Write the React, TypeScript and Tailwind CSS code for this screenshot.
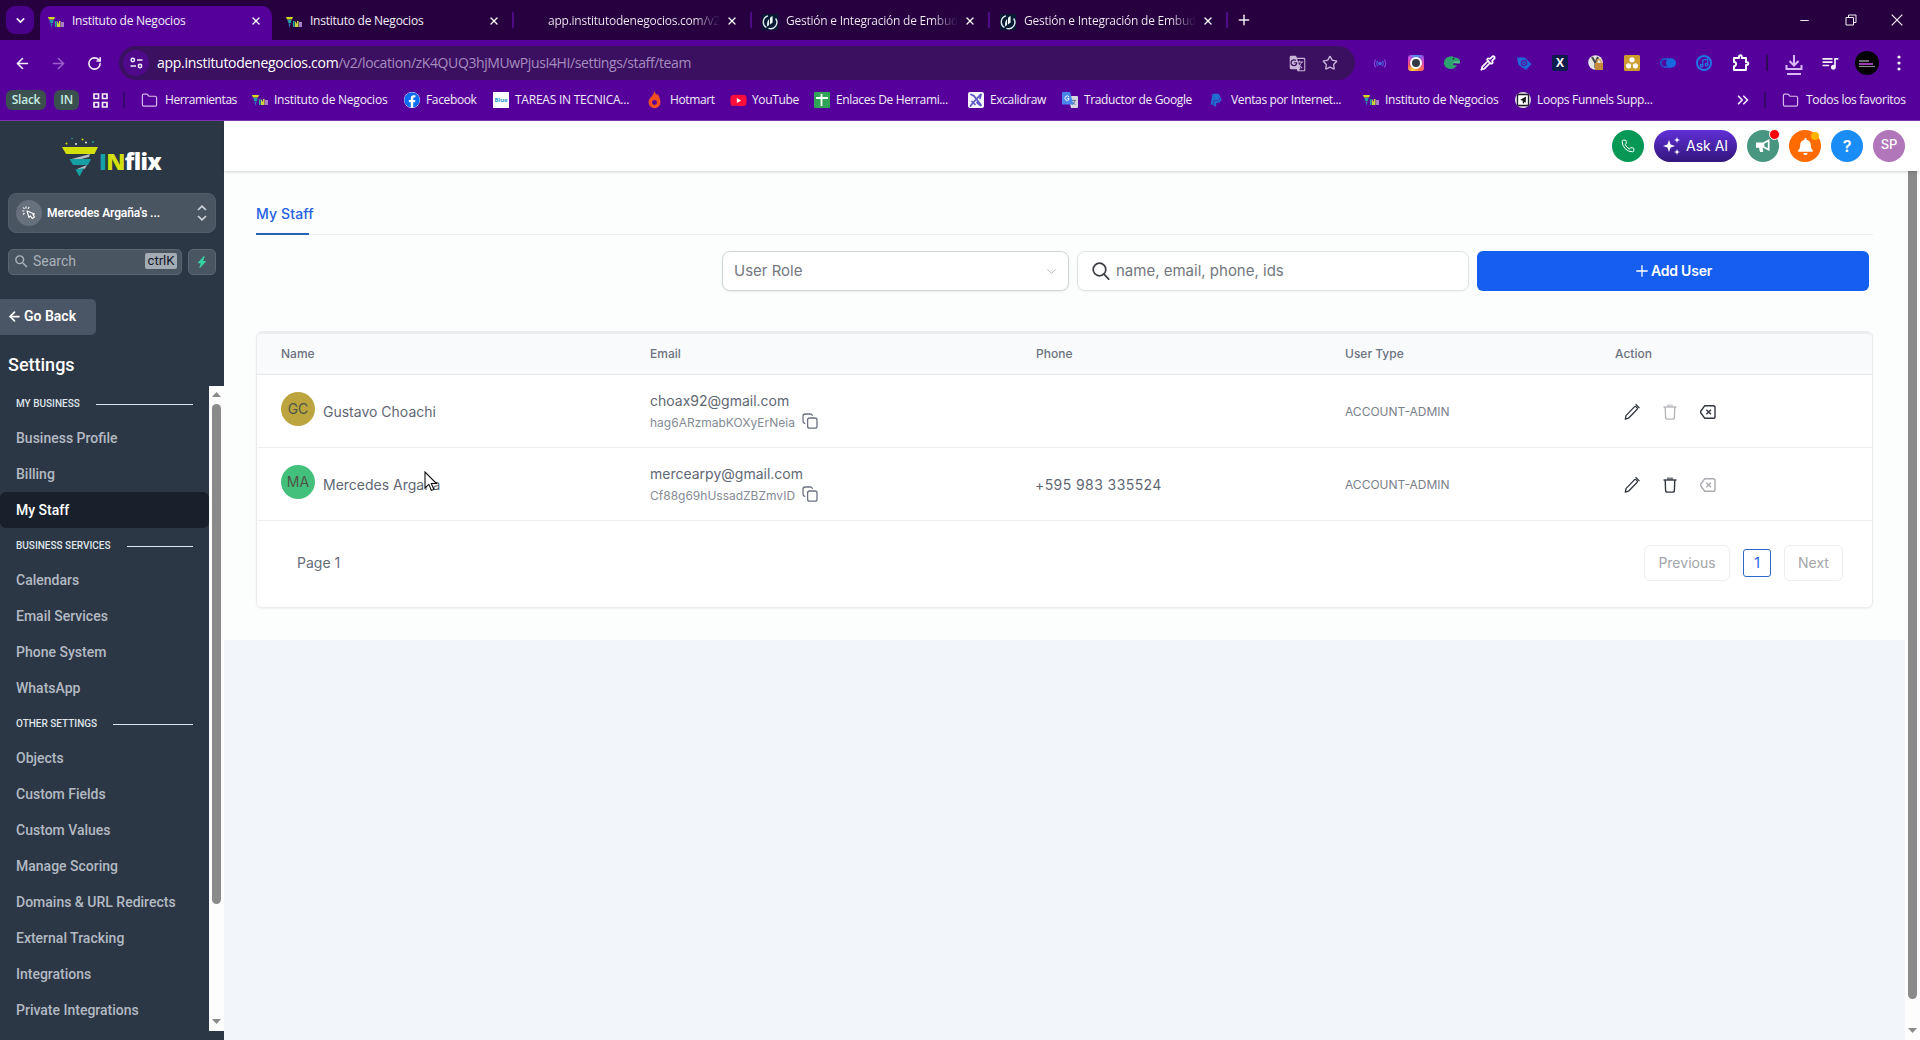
import React from 'react';
import {
  ArrowLeft, ArrowRight, RotateCw, Star, Folder, Plus, X, ChevronDown, Minus,
  ChevronsRight, Pipette, Phone, Music,
} from 'lucide-react';
import { FaFacebook, FaYoutube, FaPaypal, FaBell } from 'react-icons/fa';
import { MdGTranslate, MdQueueMusic, MdSearch } from 'react-icons/md';
import { BsLightningChargeFill } from 'react-icons/bs';

interface StaffMember {
  initials: string;
  name: string;
  email: string;
  id: string;
  phone: string;
  type: string;
  avatar: string;
  canDelete: boolean;
  canRemove: boolean;
}

const staff: StaffMember[] = [
  { initials: 'GC', name: 'Gustavo Choachi', email: 'choax92@gmail.com', id: 'hag6ARzmabKOXyErNeia', phone: '', type: 'ACCOUNT-ADMIN', avatar: 'bg-[#bca53e]', canDelete: false, canRemove: true },
  { initials: 'MA', name: 'Mercedes Argaña', email: 'mercearpy@gmail.com', id: 'Cf88g69hUssadZBZmvID', phone: '+595 983 335524', type: 'ACCOUNT-ADMIN', avatar: 'bg-[#43c07c]', canDelete: true, canRemove: false },
];

const menu = [
  { title: 'MY BUSINESS', items: ['Business Profile', 'Billing', 'My Staff'] },
  { title: 'BUSINESS SERVICES', items: ['Calendars', 'Email Services', 'Phone System', 'WhatsApp'] },
  { title: 'OTHER SETTINGS', items: ['Objects', 'Custom Fields', 'Custom Values', 'Manage Scoring', 'Domains & URL Redirects', 'External Tracking', 'Integrations', 'Private Integrations'] },
];

/* ---------- Small icons ---------- */

const InflixFavicon = () => (
  <svg width="16" height="16" viewBox="0 0 16 16" className="shrink-0">
    <path d="M0 3h7L6 5.5H1z" fill="#d2dc1e" />
    <path d="M1.5 6h4L5 9H2.3z" fill="#1f9ea8" />
    <path d="M2.5 9.5h2L3.6 14z" fill="#2b7fb5" />
    <path d="M7 7h1.600v6H7z" fill="#2aa6a0" />
    <path d="M9 13V7l2 3V7h1.500v6z" fill="#cbd43a" />
    <path d="M13 8h3v5h-3z" fill="#a77fc9" />
  </svg>
);

const FunnelDocIcon = () => (
  <svg width="16" height="16" viewBox="0 0 16 16" className="shrink-0">
    <rect width="16" height="16" fill="#061b33" />
    <path d="M6 1.800A6.400 6.400 0 0 0 4.500 13.500M13.600 4.500A6.400 6.400 0 0 1 6.500 14.400" stroke="#dfe9ee" strokeWidth="1.400" fill="none" />
    <path d="M5.200 12.500c-.5-3 0-5.500 1.900-7.500v6zM8 10.500V4c.6-.9 1.500-1.600 2.600-2v6.500z" fill="#f2f7f8" />
  </svg>
);

const HotmartIcon = () => (
  <svg width="13" height="18" viewBox="0 0 13 18" className="shrink-0">
    <path d="M6.500 0c.5 2 1.500 3 2.500 4l1-1.200c.2 2.300 2.500 4.500 2.500 8.500a6 6 0 0 1-12 0C.5 7 5.500 5.500 6.500 0z" fill="#f04e23" />
    <circle cx="6.500" cy="11.500" r="2.400" fill="#55009b" />
  </svg>
);

const SheetsIcon = () => (
  <svg width="16" height="16" viewBox="0 0 16 16" className="shrink-0">
    <rect width="16" height="16" rx="1" fill="#2fa457" />
    <path d="M7.500 2v12M2 6h12" stroke="#fff" strokeWidth="1.800" />
  </svg>
);

const ExcalidrawIcon = () => (
  <svg width="16" height="16" viewBox="0 0 16 16" className="shrink-0">
    <rect width="16" height="16" rx="2" fill="#f5f4ff" />
    <path d="M3 2.500l3 1.500 7 9M12.500 2.500L4 12l-1.500 2M13 2.500l-1 4M4 9.500l3 3M9 10.500l3.500 3" stroke="#5a55c8" strokeWidth="1.700" fill="none" strokeLinecap="round" />
  </svg>
);

const TranslateIcon = () => (
  <svg width="16" height="16" viewBox="0 0 16 16" className="shrink-0">
    <path d="M6 4h9a1 1 0 0 1 1 1v10a1 1 0 0 1-1 1H9z" fill="#d5d8de" />
    <path d="M9.500 8.500H14M11.700 7.500v1M13.200 8.500c-.5 2-1.700 3.400-3 4.200M10.600 10l2.900 3" stroke="#6b7d95" fill="none" />
    <path d="M1 0h7l3.500 12.500H1a1 1 0 0 1-1-1V1a1 1 0 0 1 1-1z" fill="#4a86ec" />
    <path d="M7 5A2.200 2.200 0 1 0 7 7.400V6.500H5.200" stroke="#fff" fill="none" />
  </svg>
);

const LoopsIcon = () => (
  <svg width="16" height="16" viewBox="0 0 16 16" className="shrink-0">
    <circle cx="8" cy="8" r="8" fill="#dcdce4" />
    <rect x="2.500" y="2.500" width="11" height="11" rx="1" fill="#fff" stroke="#1c1c28" strokeWidth="1.300" />
    <path d="M11 4.500L5 8l2.500.6L8 12l1.500-2 1.200.8z" fill="#15151c" />
  </svg>
);

const TareasIcon = () => (
  <span className="flex h-4 w-4 items-center justify-center bg-white text-[6px] font-bold tracking-tight text-[#1a9bd0]">Blue</span>
);

const CopyIcon = () => (
  <svg width="16" height="18" viewBox="0 0 16 18" fill="none" stroke="#6b7280" strokeWidth="1.300" strokeLinecap="round">
    <rect x="5.600" y="6" width="9.400" height="10.200" rx="2" />
    <path d="M2.800 11.300C1.500 11 1 10.400 1 9V4.200c0-1.300.8-2.200 2.100-2.200h5c1.200 0 1.900.5 2.200 1.400" />
  </svg>
);

const PencilIcon = () => (
  <svg width="18" height="18" viewBox="0 0 18 18" fill="none" stroke="#30363f" strokeWidth="1.300" strokeLinejoin="round">
    <path d="M2.300 16.200l.7-3.600 8.600-9a.9.9 0 0 1 1.300 0l1.300 1.300a.9.9 0 0 1 0 1.300l-8.700 9z" />
    <path d="M12.600 1.200l3.900 3.900" />
  </svg>
);

const TrashIcon = ({ muted }: { muted: boolean }) => (
  <svg width="16" height="18" viewBox="0 0 16 18" fill="none" stroke={muted ? '#b4b6ba' : '#30363f'} strokeWidth="1.400">
    <path d="M1.500 4h13" />
    <path d="M5 2.600h6" strokeWidth="2.200" opacity=".65" />
    <path d="M3.200 4l.4 10.200c0 1.200.7 1.900 1.900 1.900h5c1.200 0 1.900-.7 1.900-1.900L12.800 4" />
  </svg>
);

const RemoveIcon = ({ muted }: { muted: boolean }) => (
  <svg width="16" height="16" viewBox="0 0 16 16" fill="none" stroke={muted ? '#a9abb0' : '#30363f'} strokeWidth="1.400" strokeLinejoin="round">
    <path d="M4.800 1.700h8.300c1.200 0 1.900.7 1.900 1.900v8.800c0 1.200-.7 1.900-1.900 1.900H4.800L.900 9a1.600 1.600 0 0 1 0-2z" />
    <path d="M6.300 5.700L11 10.300M11 5.700l-4.700 4.600" />
  </svg>
);

const Arrow = ({ down = false }: { down?: boolean }) => (
  <svg width="9" height="5" viewBox="0 0 9 5" className={down ? 'rotate-180' : ''}>
    <path d="M4.500 0L9 5H0z" fill="#8a8a8a" />
  </svg>
);

/* ---------- Browser ---------- */

interface TabProps {
  title: string;
  icon?: React.ReactNode;
  active?: boolean;
  divider?: boolean;
  faded?: boolean;
}

const BrowserTab: React.FC<TabProps> = ({ title, icon, active, divider, faded }) => (
  <div className="flex h-[34px] w-[238px] shrink-0 items-start">
    <div className={`flex h-[34px] w-[232px] items-center pb-1 pl-2 pr-[10px] ${active ? 'rounded-t-[10px] bg-[#55009b]' : ''}`}>
      <span className="mt-0.5 flex h-4 w-4 shrink-0">{icon}</span>
      <span className={`ml-2 whitespace-nowrap leading-5 text-[#f4eef8] ${faded ? 'bg-gradient-to-r from-[#f4eef8] from-85% to-[#27003f] bg-clip-text text-transparent' : ''}`}>{title}</span>
      <X size={12} strokeWidth={2.600} className="ml-auto shrink-0 text-white" />
    </div>
    {divider && <span className="ml-[2px] mt-[6px] h-4 w-[2px] bg-[#4d0a86]" />}
  </div>
);

const Bookmark = ({ icon, label, className }: { icon: React.ReactNode; label: string; className: string }) => (
  <div className={`flex shrink-0 items-center ${className}`}>
    <span className="flex w-[22px] shrink-0 items-center">{icon}</span>
    <span className="whitespace-nowrap">{label}</span>
  </div>
);

const Browser = () => (
  <header className="shrink-0 bg-[#55009b] font-['Open_Sans','Noto_Sans',sans-serif] text-xs tracking-[-0.02em] text-[#f4eef8]">
    {/* Tab strip */}
    <div className="flex h-10 bg-[#27003f] pt-[6px]">
      <div className="ml-[6px] mr-[6px] flex h-7 w-7 items-center justify-center rounded-[9px] bg-[#49008a]">
        <ChevronDown size={13} strokeWidth={3} />
      </div>
      <BrowserTab title="Instituto de Negocios" icon={<InflixFavicon />} active />
      <BrowserTab title="Instituto de Negocios" icon={<InflixFavicon />} divider />
      <BrowserTab title="app.institutodenegocios.com/v2" divider faded />
      <BrowserTab title="Gestión e Integración de Embud" icon={<FunnelDocIcon />} divider faded />
      <BrowserTab title="Gestión e Integración de Embud" icon={<FunnelDocIcon />} divider faded />
      <Plus size={16} strokeWidth={2.200} className="ml-[6px] mt-[6px]" />
      <div className="ml-auto flex h-7 items-center">
        <Minus size={13} strokeWidth={1.800} className="mr-[34px]" />
        <svg width="12" height="12" viewBox="0 0 12 12" fill="none" stroke="currentColor" className="mr-[34px]">
          <path d="M1 3.500h7.500V11H1zM3.500 3.500V1H11v7.500H8.500" />
        </svg>
        <svg width="12" height="12" viewBox="0 0 12 12" stroke="currentColor" strokeWidth="1.200" className="mr-[17px]">
          <path d="M.7.7l10.600 10.600M11.300.7L.7 11.300" />
        </svg>
      </div>
    </div>

    {/* Address bar */}
    <div className="flex h-[46px] items-center">
      <ArrowLeft size={17} strokeWidth={2.300} className="ml-[14px]" />
      <ArrowRight size={17} strokeWidth={2.300} className="ml-[19px] text-[#9a5fc9]" />
      <RotateCw size={15} strokeWidth={2.500} className="ml-[20px]" />
      <div className="ml-[17px] flex h-[34px] w-[1236px] items-center rounded-full bg-[#3c1060] pl-1">
        <span className="flex h-[26px] w-[26px] items-center justify-center rounded-full bg-[#4f0a8c]">
          <svg width="13" height="12" viewBox="0 0 13 12" fill="none" stroke="currentColor" strokeWidth="1.500">
            <circle cx="2.800" cy="3" r="1.700" />
            <path d="M7 3h5.500M.5 9H6" />
            <circle cx="10" cy="9" r="1.700" />
          </svg>
        </span>
        <span className="ml-2 w-[1132px] whitespace-nowrap text-sm tracking-[-0.028em] text-[#a78cc0]">
          <span className="tracking-[-0.02em] text-white">app.institutodenegocios.com</span>/v2/location/zK4QUQ3hjMUwPjusI4HI/settings/staff/team
        </span>
        <MdGTranslate size={17} className="shrink-0 text-[#c9b6da]" />
        <Star size={16} strokeWidth={2} className="ml-[16px] shrink-0 text-[#c9b6da]" />
      </div>
      <div className="ml-[17px] flex items-center gap-5">
        <svg width="16" height="16" viewBox="0 0 16 16" fill="none" stroke="#4967e0" strokeWidth="1.100">
          <circle cx="8" cy="8.500" r="1.300" fill="#4967e0" />
          <path d="M5.800 6a3.500 3.500 0 0 0 0 5M10.200 6a3.500 3.500 0 0 1 0 5" />
          <path d="M3.900 4.600a5.500 5.500 0 0 0 0 7.800M12.100 4.600a5.500 5.500 0 0 1 0 7.800" stroke="#8a4be0" />
        </svg>
        <span className="flex h-4 w-4 items-center justify-center rounded-[3px] bg-[conic-gradient(from_0deg,#3b9df0,#a34be0,#f34aa0,#ff7a3c,#ffd23c,#f34a6a,#d04be0,#3b9df0)]">
          <span className="h-3 w-3 rounded-full border-2 border-white bg-[#343a44]" />
        </span>
        <svg width="16" height="16" viewBox="0 0 16 16">
          <path d="M0 8c0-4 3-6.500 7-6.500l1-.500 2 1.500c3 0 6 1.500 6 3.500 0 1.500-.8 2.500-1.500 2.500L10 8l-1 2 4 .500c-1.500 2.500-4 3.500-6 3.500-4 0-7-2.500-7-6z" fill="#2ea36f" />
          <path d="M9 8l1-1.500h5.800V8.500z" fill="#58c08d" />
          <circle cx="9.500" cy="3.800" r=".9" fill="#173d2d" />
        </svg>
        <Pipette size={16} strokeWidth={2.600} className="text-white" />
        <svg width="16" height="16" viewBox="0 0 16 16">
          <path d="M1 2.500h7.500L15.500 9l-5.500 5.800L2.500 10z" fill="#1e6bdc" />
          <circle cx="8" cy="8" r="2.600" fill="none" stroke="#4d1ba0" strokeWidth="1.300" />
          <circle cx="8" cy="8" r="1" fill="#4d1ba0" />
        </svg>
        <span className="flex h-4 w-4 items-center justify-center rounded-[2px] bg-[#0d1b4d] text-xs font-bold text-white">X</span>
        <svg width="16" height="16" viewBox="0 0 16 16">
          <circle cx="7.500" cy="7.500" r="7.300" fill="#e4e4e4" />
          <path d="M4 2l3.500 6V13M10 2L7.500 8" stroke="#4c4c4c" strokeWidth="2.200" fill="none" />
          <rect x="7" y="8" width="8" height="7" fill="#c58a3a" />
          <path d="M9 8V6.500a2 2 0 0 1 4 0V8" stroke="#d8a659" strokeWidth="1.300" fill="none" />
        </svg>
        <svg width="16" height="16" viewBox="0 0 16 16">
          <rect width="16" height="16" rx="1.500" fill="#cf9d2e" />
          <circle cx="8" cy="4.800" r="2.600" fill="#fff" />
          <circle cx="4.600" cy="10.800" r="2.600" fill="#fff" />
          <circle cx="11.400" cy="10.800" r="2.600" fill="#fff" />
        </svg>
        <svg width="16" height="16" viewBox="0 0 16 16">
          <rect x=".7" y="4" width="14.600" height="8" rx="4" fill="none" stroke="#1769e0" strokeWidth="1.300" />
          <rect x="6" y="4" width="9.500" height="8" rx="4" fill="#1769e0" />
        </svg>
        <span className="flex h-4 w-4 items-center justify-center rounded-full border-2 border-[#1f77e6] text-[#1f77e6]">
          <Music size={10} strokeWidth={3} className="shrink-0" />
        </span>
        <svg width="18" height="18" viewBox="0 0 18 18" fill="none" stroke="#fff" strokeWidth="1.900" strokeLinejoin="round">
          <path d="M2 4h5V2.600a1.400 1.400 0 0 1 2.800 0V4H14v4.200h1a1.400 1.400 0 0 1 0 2.800h-1V16H2v-3.800a2.100 2.100 0 0 0 0-4.200z" />
        </svg>
      </div>
      <span className="ml-[16px] h-4 w-[2px] bg-[#2e0a55]" />
      <svg width="18" height="22" viewBox="0 0 18 22" fill="none" stroke="#d9b8f5" strokeWidth="2" className="ml-[17px] mt-1">
        <path d="M9 1v10M4.500 7L9 11.500 13.500 7M1.500 11v4h15v-4" />
        <path d="M2 20h14" />
      </svg>
      <MdQueueMusic size={20} className="ml-[17px]" />
      <span className="ml-[15px] flex h-6 w-6 items-center justify-center rounded-full bg-black">
        <span className="flex flex-col gap-px">
          <span className="h-[2px] w-[10px] bg-[#6d6d75]" />
          <span className="h-[2px] w-[14px] bg-[#a13bb5]" />
          <span className="h-px w-[16px] bg-[#8d8d95]" />
        </span>
      </span>
      <svg width="4" height="18" viewBox="0 0 4 18" fill="currentColor" className="ml-[18px]">
        <circle cx="2" cy="3" r="1.600" /><circle cx="2" cy="9" r="1.600" /><circle cx="2" cy="15" r="1.600" />
      </svg>
    </div>

    {/* Bookmarks */}
    <div className="flex h-[35px] items-center border-b border-[#7a35b5] pb-[6px]">
      <span className="ml-[6px] flex h-5 w-10 items-center justify-center rounded-md bg-[#3a504f] font-semibold text-[#c9eee6]">Slack</span>
      <span className="ml-2 flex h-5 w-[25px] items-center justify-center rounded-md bg-[#3a504f] font-semibold text-[#c9eee6]">IN</span>
      <svg width="15" height="15" viewBox="0 0 15 15" fill="none" stroke="currentColor" strokeWidth="1.700" className="ml-[14px]">
        <path d="M1 1h4.500v4.500H1zM9.500 1H14v4.500H9.500zM1 9.500h4.500V14H1zM9.500 9.500H14V14H9.500z" />
      </svg>
      <span className="ml-[15px] h-4 w-[2px] bg-[#38076b]" />
      <span className="ml-[16px] w-6"><Folder size={17} strokeWidth={1.700} className="text-[#d5b9ec]" /></span>
      <span className="w-[87px] whitespace-nowrap tracking-[-0.035em]">Herramientas</span>
      <Bookmark icon={<InflixFavicon />} label="Instituto de Negocios" className="w-[152px]" />
      <Bookmark icon={<FaFacebook size={16} className="rounded-full bg-white text-[#0c6cf2]" />} label="Facebook" className="w-[89px] tracking-[-0.03em]" />
      <Bookmark icon={<TareasIcon />} label="TAREAS IN TECNICA..." className="w-[155px]" />
      <Bookmark icon={<HotmartIcon />} label="Hotmart" className="w-[82px] tracking-[-0.03em]" />
      <Bookmark icon={<span className="relative flex items-center justify-center"><span className="absolute h-2 w-2 bg-white" /><FaYoutube size={17} className="relative text-[#fb0f3a]" /></span>} label="YouTube" className="w-[84px] tracking-[-0.03em]" />
      <Bookmark icon={<SheetsIcon />} label="Enlaces De Herrami..." className="w-[154px] tracking-[-0.03em]" />
      <Bookmark icon={<ExcalidrawIcon />} label="Excalidraw" className="w-[94px] tracking-[-0.03em]" />
      <Bookmark icon={<TranslateIcon />} label="Traductor de Google" className="w-[147px] tracking-[-0.03em]" />
      <Bookmark icon={<FaPaypal size={14} className="text-[#1f6fd0]" />} label="Ventas por Internet..." className="w-[154px] tracking-[-0.03em]" />
      <Bookmark icon={<InflixFavicon />} label="Instituto de Negocios" className="w-[152px]" />
      <Bookmark icon={<LoopsIcon />} label="Loops Funnels Supp..." className="w-[219px] tracking-[-0.025em]" />
      <ChevronsRight size={18} strokeWidth={2.200} className="shrink-0" />
      <span className="ml-[12px] h-4 w-[2px] shrink-0 bg-[#38076b]" />
      <span className="ml-[16px] w-6 shrink-0"><Folder size={17} strokeWidth={1.700} className="text-[#d5b9ec]" /></span>
      <span className="whitespace-nowrap tracking-[-0.025em]">Todos los favoritos</span>
    </div>
  </header>
);

/* ---------- Sidebar ---------- */

const Logo = () => (
  <div className="flex h-10 items-center pl-[62px]">
    <svg width="36" height="40" viewBox="0 0 36 40" className="shrink-0">
      <circle cx="4.500" cy="6.500" r="1" fill="#cddc14" />
      <circle cx="10" cy="1.500" r=".8" fill="#1fa9a8" />
      <circle cx="14" cy="7" r=".9" fill="#fff" />
      <circle cx="20.500" cy="2.500" r="1" fill="#cddc14" />
      <circle cx="24" cy="5.500" r=".9" fill="#fff" />
      <circle cx="31" cy="5" r=".9" fill="#1fa9a8" />
      <path d="M0 10h36l-3.500 7H4z" fill="#d3e00b" />
      <path d="M28 17L8 22.500l4 1.500 15-4z" fill="#b9bdc2" />
      <path d="M7.500 22H29l-3 6H11z" fill="#15a0a5" />
      <path d="M25 28l-10 4 3 1.500 5-2z" fill="#b9bdc2" />
      <path d="M13.500 32.500L22 31l-4.500 8.500z" fill="#15a0a5" />
    </svg>
    <span className="ml-px mt-[8px] font-['Open_Sans',sans-serif] text-[23px] font-extrabold leading-none tracking-[-0.03em] text-white">
      <span className="text-[#15a0a5]">I</span><span className="text-[#d3e00b]">N</span>flix
    </span>
  </div>
);

const Sidebar = () => (
  <aside className="flex w-56 shrink-0 flex-col bg-[#2c3745] pt-4 font-['Roboto',sans-serif]">
    <Logo />
    <div className="mx-2 mt-4 flex h-10 shrink-0 items-center rounded-lg border border-[#525e6b] bg-[#4a5562] pl-[7px] pr-2">
      <span className="flex h-[26px] w-[26px] items-center justify-center rounded-full bg-[#67717d]">
        <svg width="14" height="14" viewBox="0 0 14 14" fill="none" stroke="#fff" strokeWidth="1.100" strokeLinejoin="round">
          <path d="M5 5l2 6.500 1.400-1.600 1.800 2.600 2.300-1.500-1.600-2.400L12.500 8z" />
          <path d="M4 .5v2M1.200 1.500l1.300 1.400M.3 5h2M7.300 1L6 2.800M1 8.500l1.500-1.300" />
        </svg>
      </span>
      <span className="ml-[5px] flex-1 whitespace-nowrap text-xs font-semibold tracking-[-0.01em] text-white">Mercedes Argaña's ...</span>
      <svg width="10" height="16" viewBox="0 0 10 16" fill="none" stroke="#cfd4da" strokeWidth="1.700" className="shrink-0">
        <path d="M1 5l4-3.800L9 5M1 11l4 3.800L9 11" />
      </svg>
    </div>
    <div className="mx-2 mt-4 flex h-[26px] shrink-0 gap-[6px]">
      <div className="flex w-[174px] items-center rounded-[5px] border border-[#5b6672] bg-[#4a5562] pb-0.5 pl-1 pr-1">
        <MdSearch size={17} className="text-[#a9b1ba]" />
        <span className="ml-[3px] flex-1 text-sm text-[#a9b1ba]">Search</span>
        <span className="flex h-4 w-8 items-center justify-center rounded-[2px] bg-[#a3abb5] text-[13px] text-[#111827]">ctrlK</span>
      </div>
      <div className="flex w-7 items-center justify-center rounded-[5px] border border-[#5b6672] bg-[#4a5562]">
        <BsLightningChargeFill size={12} className="text-[#35d3a4]" stroke="currentColor" />
      </div>
    </div>
    <div className="mt-6 flex h-9 w-24 shrink-0 items-center rounded-r-[5px] bg-[#4a5565] pl-[7px] pb-0.5 text-sm font-semibold text-white">
      <ArrowLeft size={15} strokeWidth={2.800} />
      <span className="ml-[2px]">Go Back</span>
    </div>
    <h1 className="mt-[18px] pl-2 text-lg font-medium leading-6 text-white">Settings</h1>
    <div className="mt-[9px] flex h-[645px] shrink-0">
      <nav className="w-[209px] overflow-hidden">
        {menu.map((group) => (
          <div key={group.title}>
            <div className="flex h-[34px] items-center pl-4 pr-4 text-[10px] font-medium text-[#dfe5ea]">
              <span className="whitespace-nowrap">{group.title}</span>
              <span className="ml-4 mt-0.5 h-px flex-1 bg-[#dbe8ee]" />
            </div>
            {group.items.map((item) => (
              <div
                key={item}
                className={`flex h-9 items-center whitespace-nowrap pb-px pl-4 text-sm font-medium ${item === 'My Staff' ? 'rounded-md bg-[#18202b] text-white' : 'text-[#b3bac3]'}`}
              >
                {item}
              </div>
            ))}
          </div>
        ))}
      </nav>
      <div className="flex w-[15px] flex-col items-center bg-[#fdfdfd] pt-[6px]">
        <Arrow />
        <div className="mt-[7px] h-[500px] w-[9px] rounded-full bg-[#8a8a8a]" />
        <div className="mb-[7px] mt-auto flex"><Arrow down /></div>
      </div>
    </div>
  </aside>
);

/* ---------- Main area ---------- */

const TopBar = () => (
  <div className="relative z-10 flex h-[50px] shrink-0 items-center justify-end gap-[10px] bg-white pr-[15px] shadow-[0_1px_3px_rgba(0,0,0,0.18)]">
    <span className="flex h-8 w-8 items-center justify-center rounded-full bg-[#079855] text-white"><Phone size={14} strokeWidth={1.700} /></span>
    <span className="flex h-8 w-[83px] items-center rounded-full bg-gradient-to-b from-[#6130d8] to-[#32167b] pl-[9px] text-white">
      <svg width="18" height="18" viewBox="0 0 18 18" fill="currentColor">
        <path d="M6 3l1.600 4.400L12 9l-4.400 1.600L6 15l-1.600-4.400L0 9l4.400-1.600z" />
        <path d="M14 0l.8 2.200 2.200.8-2.200.8L14 6l-.8-2.200L11 3l2.200-.8zM14 12l.8 2.200 2.200.8-2.200.8L14 18l-.8-2.200L11 15l2.200-.8z" />
      </svg>
      <span className="ml-[5px] whitespace-nowrap font-['Inter',sans-serif] text-sm">Ask AI</span>
    </span>
    <span className="relative flex h-8 w-8 items-center justify-center rounded-full bg-[#48967f] text-white">
      <svg width="16" height="16" viewBox="0 0 16 16">
        <path d="M1 4.500h7L14.500 1v12L8 9.800h-.5L8.300 14H5L4 9.800H1z" fill="currentColor" />
        <path d="M9.300 5.800l3.500-2v6.400l-3.500-1.700z" fill="#48967f" />
      </svg>
      <span className="absolute -right-px -top-px h-[11px] w-[11px] rounded-full border border-white bg-[#fb0007]" />
    </span>
    <span className="relative flex h-8 w-8 items-center justify-center rounded-full bg-[#ff6b00] text-white">
      <FaBell size={17} />
      <span className="absolute right-[2px] top-[2px] h-2 w-2 rounded-full bg-[#ffb300]" />
    </span>
    <span className="flex h-8 w-8 items-center justify-center rounded-full bg-[#1a8cf5] font-['Inter',sans-serif] text-base font-semibold text-white">?</span>
    <span className="flex h-8 w-8 items-center justify-center rounded-full bg-[#b176b9] pb-0.5 font-['Inter',sans-serif] text-[13px] font-medium text-white">SP</span>
  </div>
);

const columns = 'grid grid-cols-[369px_386px_309px_270px_1fr] pl-6';

const StaffTable = () => (
  <div className="mt-10 h-[277px] rounded-md border border-[#e9ebed] bg-white shadow-[0_1px_2px_rgba(16,24,40,0.05)]">
    <div className={`${columns} h-[43px] items-center rounded-t-md border-b border-t-2 border-b-[#e6e8ea] border-t-[#eceef0] bg-[#f9fafb] text-xs font-medium text-[#6b7280]`}>
      <span>Name</span>
      <span>Email</span>
      <span>Phone</span>
      <span>User Type</span>
      <span>Action</span>
    </div>
    {staff.map((member) => (
      <div key={member.id} className={`${columns} h-[73px] items-center border-b border-[#ebedef] pt-px text-sm text-[#5f6774]`}>
        <div className="flex items-center">
          <span className={`mb-[5px] flex h-[34px] w-[34px] items-center justify-center rounded-full text-[#4f5547] ${member.avatar}`}>{member.initials}</span>
          <span className="ml-2">{member.name}</span>
        </div>
        <div className="flex flex-col pt-0.5">
          <span className="leading-5">{member.email}</span>
          <span className="mt-px flex h-[22px] items-center text-xs text-[#858b95]">
            {member.id}
            <span className="-mt-[4px] ml-[7px]"><CopyIcon /></span>
          </span>
        </div>
        <span className="-ml-px tracking-[0.03em]">{member.phone}</span>
        <span className="text-xs text-[#7a808a]">{member.type}</span>
        <div className="flex items-center gap-[21px] pl-2">
          <PencilIcon />
          <TrashIcon muted={!member.canDelete} />
          <span className="ml-px"><RemoveIcon muted={!member.canRemove} /></span>
        </div>
      </div>
    ))}
    <div className="flex h-[83px] items-center pl-10 pr-[29px] text-sm text-[#666d79]">
      <span>Page 1</span>
      <div className="ml-auto flex items-center gap-[13px] text-[#a3a5a9]">
        <span className="flex h-9 w-[86px] items-center justify-center rounded-md border border-[#eceeef]">Previous</span>
        <span className="flex h-7 w-7 items-center justify-center rounded-[3px] border border-[#2f66c8] text-[#2563eb]">1</span>
        <span className="flex h-9 w-[59px] items-center justify-center rounded-md border border-[#eceeef]">Next</span>
      </div>
    </div>
  </div>
);

const Cursor = () => (
  <svg width="14" height="21" viewBox="0 0 14 21" className="absolute left-[424px] top-[471px] z-20">
    <path d="M1 1v16l3.800-3.600 2.600 6 2.400-1-2.500-5.900h5.200z" fill="#fff" stroke="#111" strokeWidth="1.100" />
  </svg>
);

const App: React.FC = () => (
  <div className="relative flex h-[1040px] w-[1920px] flex-col overflow-hidden bg-white">
    <Browser />
    <div className="flex flex-1">
      <Sidebar />
      <div className="flex flex-1 flex-col">
        <TopBar />
        <div className="flex flex-1">
          <main className="flex-1 bg-[#f2f6fa] font-['Inter',sans-serif]">
            <section className="h-[469px] bg-[#fcfefd] pl-8 pr-8">
              <div className="flex h-[64px] items-end border-b border-[#eceff1]">
                <span className="-mb-px w-[53px] whitespace-nowrap border-b-2 border-[#2a5fb8] pb-[9px] text-sm font-medium leading-5 tracking-[0.01em] text-[#2460e0]">My Staff</span>
              </div>
              <div className="mt-4 flex justify-end gap-2 pr-1 text-[15px] text-[#737880]">
                <div className="flex h-10 w-[347px] items-center justify-between rounded-lg border border-[#d2d5d8] bg-white pl-[11px] pr-[9px] shadow-[0_1px_2px_rgba(16,24,40,0.08)]">
                  User Role
                  <ChevronDown size={15} strokeWidth={1.500} className="text-[#b5b8bc]" />
                </div>
                <div className="flex h-10 w-[392px] items-center rounded-lg border border-[#e0e2e5] bg-white pl-[13px] shadow-[0_1px_2px_rgba(16,24,40,0.05)]">
                  <svg width="19" height="20" viewBox="0 0 19 20" fill="none" stroke="#3a3d42" strokeWidth="1.700" strokeLinecap="round">
                    <circle cx="8.500" cy="8.500" r="6.300" />
                    <path d="M13 13.200l4.700 5" />
                  </svg>
                  <span className="ml-[6px]">name, email, phone, ids</span>
                </div>
                <button className="flex h-10 w-[392px] items-center justify-center rounded-md bg-[#155eef] text-sm font-semibold tracking-[-0.015em] text-white">
                  <Plus size={18} strokeWidth={1.700} className="-ml-px" />
                  Add User
                </button>
              </div>
              <StaffTable />
            </section>
          </main>
          <div className="flex w-[15px] flex-col items-center bg-[#fdfdfd]">
            <div className="h-[828px] w-[9px] rounded-b-full bg-[#8a8a8a]" />
            <div className="mb-[7px] mt-auto flex"><Arrow down /></div>
          </div>
        </div>
      </div>
    </div>
    <Cursor />
  </div>
);

export default App;
